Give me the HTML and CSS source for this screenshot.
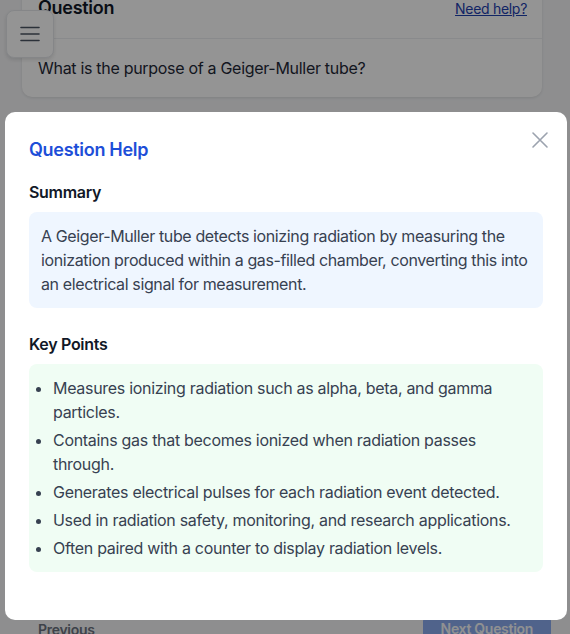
FILE: index.html
```html
<!DOCTYPE html>
<html lang="en">
<head>
  <meta charset="UTF-8">
  <meta name="viewport" content="width=device-width, initial-scale=1.0">
  <title>Quiz Question</title>
  <link rel="stylesheet" href="styles.css">
</head>
<body>
  <button class="menu-btn" aria-label="Open menu">
    <svg viewBox="0 0 24 24" width="24" height="24" fill="none" stroke="#4b5563" stroke-width="1.6" stroke-linecap="round">
      <path d="M3 5.5h18M3 12h18M3 18.5h18"/>
    </svg>
  </button>

  <main class="page">
    <section class="card">
      <div class="card-head">
        <h2>Question</h2>
        <a href="#" class="help-link">Need help?</a>
      </div>
      <p class="card-body">What is the purpose of a Geiger-Muller tube?</p>
    </section>

    <div class="answers"></div>

    <div class="nav">
      <button class="btn-prev" disabled>Previous</button>
      <button class="btn-next" disabled>Next Question</button>
    </div>
  </main>

  <div class="overlay">
    <div class="modal">
      <button class="close-btn" aria-label="Close">
        <svg viewBox="0 0 24 24" width="28" height="28" fill="none" stroke="#9ca3af" stroke-width="1.4" stroke-linecap="round">
          <path d="M6 6l12 12M18 6L6 18"/>
        </svg>
      </button>

      <h3 class="modal-title">Question Help</h3>

      <div class="section">
        <h4>Summary</h4>
        <div class="box box-blue">
          A Geiger-Muller tube detects ionizing radiation by measuring the ionization produced within a gas-filled chamber, converting this into an electrical signal for measurement.
        </div>
      </div>

      <div class="section">
        <h4>Key Points</h4>
        <div class="box box-green">
          <ul>
            <li>Measures ionizing radiation such as alpha, beta, and gamma particles.</li>
            <li>Contains gas that becomes ionized when radiation passes through.</li>
            <li>Generates electrical pulses for each radiation event detected.</li>
            <li>Used in radiation safety, monitoring, and research applications.</li>
            <li>Often paired with a counter to display radiation levels.</li>
          </ul>
        </div>
      </div>
    </div>
  </div>
</body>
</html>
```

FILE: styles.css
```css
* {
  margin: 0;
  padding: 0;
  box-sizing: border-box;
  font-family: 'Inter', 'Liberation Sans', sans-serif;
  letter-spacing: -0.3px;
}

body {
  background: #f4f5f7;
  color: #1f2937;
  overflow: hidden;
  height: 634px;
}

.menu-btn {
  position: fixed;
  top: 10px;
  left: 6px;
  width: 48px;
  height: 48px;
  background: #fff;
  border: 1px solid #e5e7eb;
  border-radius: 8px;
  box-shadow: 0 2px 4px rgba(0, 0, 0, 0.12);
  display: flex;
  align-items: center;
  justify-content: center;
  z-index: 5;
}

.page {
  padding: 0 0 0 22px;
}

.card {
  width: 520px;
  margin-top: -22px;
  background: #fff;
  border-radius: 10px;
  box-shadow: 0 1px 3px rgba(0, 0, 0, 0.1);
}

.card-head {
  display: flex;
  justify-content: space-between;
  align-items: center;
  padding: 16px;
  border-bottom: 1px solid #eceef1;
}

.card-head h2 {
  font-size: 18px;
  line-height: 28px;
  font-weight: 600;
  color: #111827;
}

.help-link {
  font-size: 14px;
  color: #1e40af;
  text-decoration: underline;
  margin-right: -1px;
}

.card-body {
  padding: 16px 16px 16px;
  font-size: 16px;
  line-height: 26px;
  color: #1f2937;
}

.answers {
  height: 518px;
}

.nav {
  display: flex;
  justify-content: space-between;
  align-items: flex-start;
  width: 529px;
}

.btn-prev {
  background: none;
  border: none;
  padding: 4px 16px;
  font-size: 14px;
  font-weight: 600;
  color: #6b7280;
  margin-top: 2px;
}

.btn-next {
  background: #2563eb;
  opacity: 0.5;
  border: none;
  border-radius: 6px;
  padding: 5px 18px;
  font-size: 14px;
  font-weight: 600;
  color: #fff;
}

.overlay {
  position: fixed;
  inset: 0;
  background: rgba(0, 0, 0, 0.42);
  padding: 112px 0 0 5px;
  z-index: 10;
}

.modal {
  position: relative;
  width: 562px;
  background: #fff;
  border-radius: 10px;
  padding: 24px;
}

.close-btn {
  position: absolute;
  top: 14px;
  right: 13px;
  background: none;
  border: none;
  display: flex;
}

.modal-title {
  font-size: 18px;
  line-height: 28px;
  font-weight: 600;
  color: #1d4ed8;
  margin-bottom: 16px;
}

.section {
  margin-bottom: 24px;
}

.section h4 {
  font-size: 16px;
  line-height: 24px;
  font-weight: 600;
  color: #111827;
  margin-bottom: 8px;
}

.box {
  border-radius: 8px;
  padding: 12px;
  font-size: 16px;
  line-height: 24px;
  color: #374151;
  letter-spacing: -0.38px;
}

.box-blue {
  background: #eff6ff;
}

.box-green {
  background: #f0fdf4;
}

.box ul {
  padding-left: 12px;
  list-style: disc;
}

.box li + li {
  margin-top: 4px;
}
```
